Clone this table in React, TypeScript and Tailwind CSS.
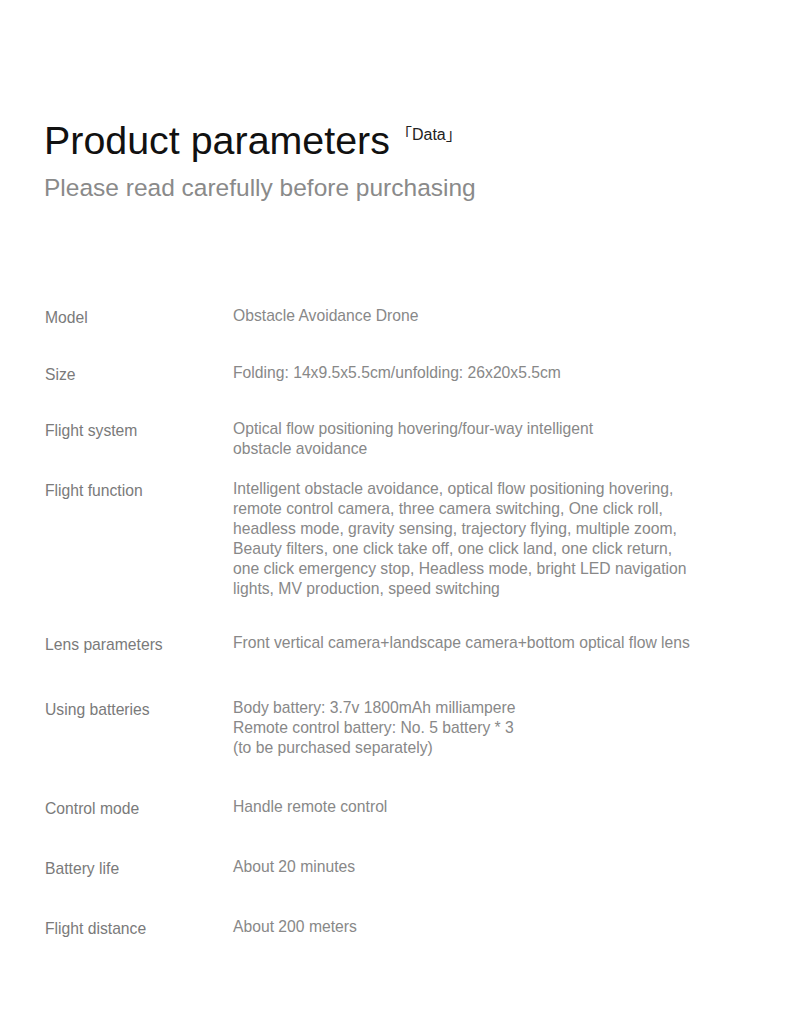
const rows = [
  { label: "Model", lines: ["Obstacle Avoidance Drone"], gap: "mt-0" },
  { label: "Size", lines: ["Folding: 14x9.5x5.5cm/unfolding: 26x20x5.5cm"], gap: "mt-[37px]" },
  {
    label: "Flight system",
    lines: ["Optical flow positioning hovering/four-way intelligent", "obstacle avoidance"],
    gap: "mt-[36px]",
  },
  {
    label: "Flight function",
    lines: [
      "Intelligent obstacle avoidance, optical flow positioning hovering,",
      "remote control camera, three camera switching, One click roll,",
      "headless mode, gravity sensing, trajectory flying, multiple zoom,",
      "Beauty filters, one click take off, one click land, one click return,",
      "one click emergency stop, Headless mode, bright LED navigation",
      "lights, MV production, speed switching",
    ],
    gap: "mt-[20px]",
  },
  {
    label: "Lens parameters",
    lines: ["Front vertical camera+landscape camera+bottom optical flow lens"],
    gap: "mt-[34px]",
  },
  {
    label: "Using batteries",
    lines: [
      "Body battery: 3.7v 1800mAh milliampere",
      "Remote control battery: No. 5 battery * 3",
      "(to be purchased separately)",
    ],
    gap: "mt-[45px]",
  },
  { label: "Control mode", lines: ["Handle remote control"], gap: "mt-[39px]" },
  { label: "Battery life", lines: ["About 20 minutes"], gap: "mt-[40px]" },
  { label: "Flight distance", lines: ["About 200 meters"], gap: "mt-[40px]" },
]

export default function App() {
  return (
    <div
      className="min-h-[1019px] w-[790px] bg-white"
      style={{ fontFamily: '"Liberation Sans", Arial, "Noto Sans CJK SC", sans-serif' }}
    >
      {/* Header */}
      <div className="pl-[44px] pt-[121px]">
        <div className="flex items-start">
          <h1 className="text-[39.4px] leading-[39px] font-normal text-[#111111]">Product parameters</h1>
          <span className="ml-[6px] mt-[5px] text-[16px] leading-[18px] text-[#222222]">「Data」</span>
        </div>
        <p className="mt-[16px] text-[24.5px] leading-[24px] text-[#8a8a8a]">
          Please read carefully before purchasing
        </p>
      </div>

      {/* Parameter table */}
      <div className="pl-[45px] pt-[106px] pb-[83px]">
        {rows.map((row) => (
          <div key={row.label} className={`flex ${row.gap}`}>
            <div className="w-[188px] shrink-0 pt-[3px] text-[15.7px] leading-[17px] text-[#7a7a7a]">
              {row.label}
            </div>
            <div className="text-[15.7px] leading-[20px] text-[#888888]">
              {row.lines.map((line) => (
                <div key={line} className="whitespace-nowrap">
                  {line}
                </div>
              ))}
            </div>
          </div>
        ))}
      </div>
    </div>
  )
}
